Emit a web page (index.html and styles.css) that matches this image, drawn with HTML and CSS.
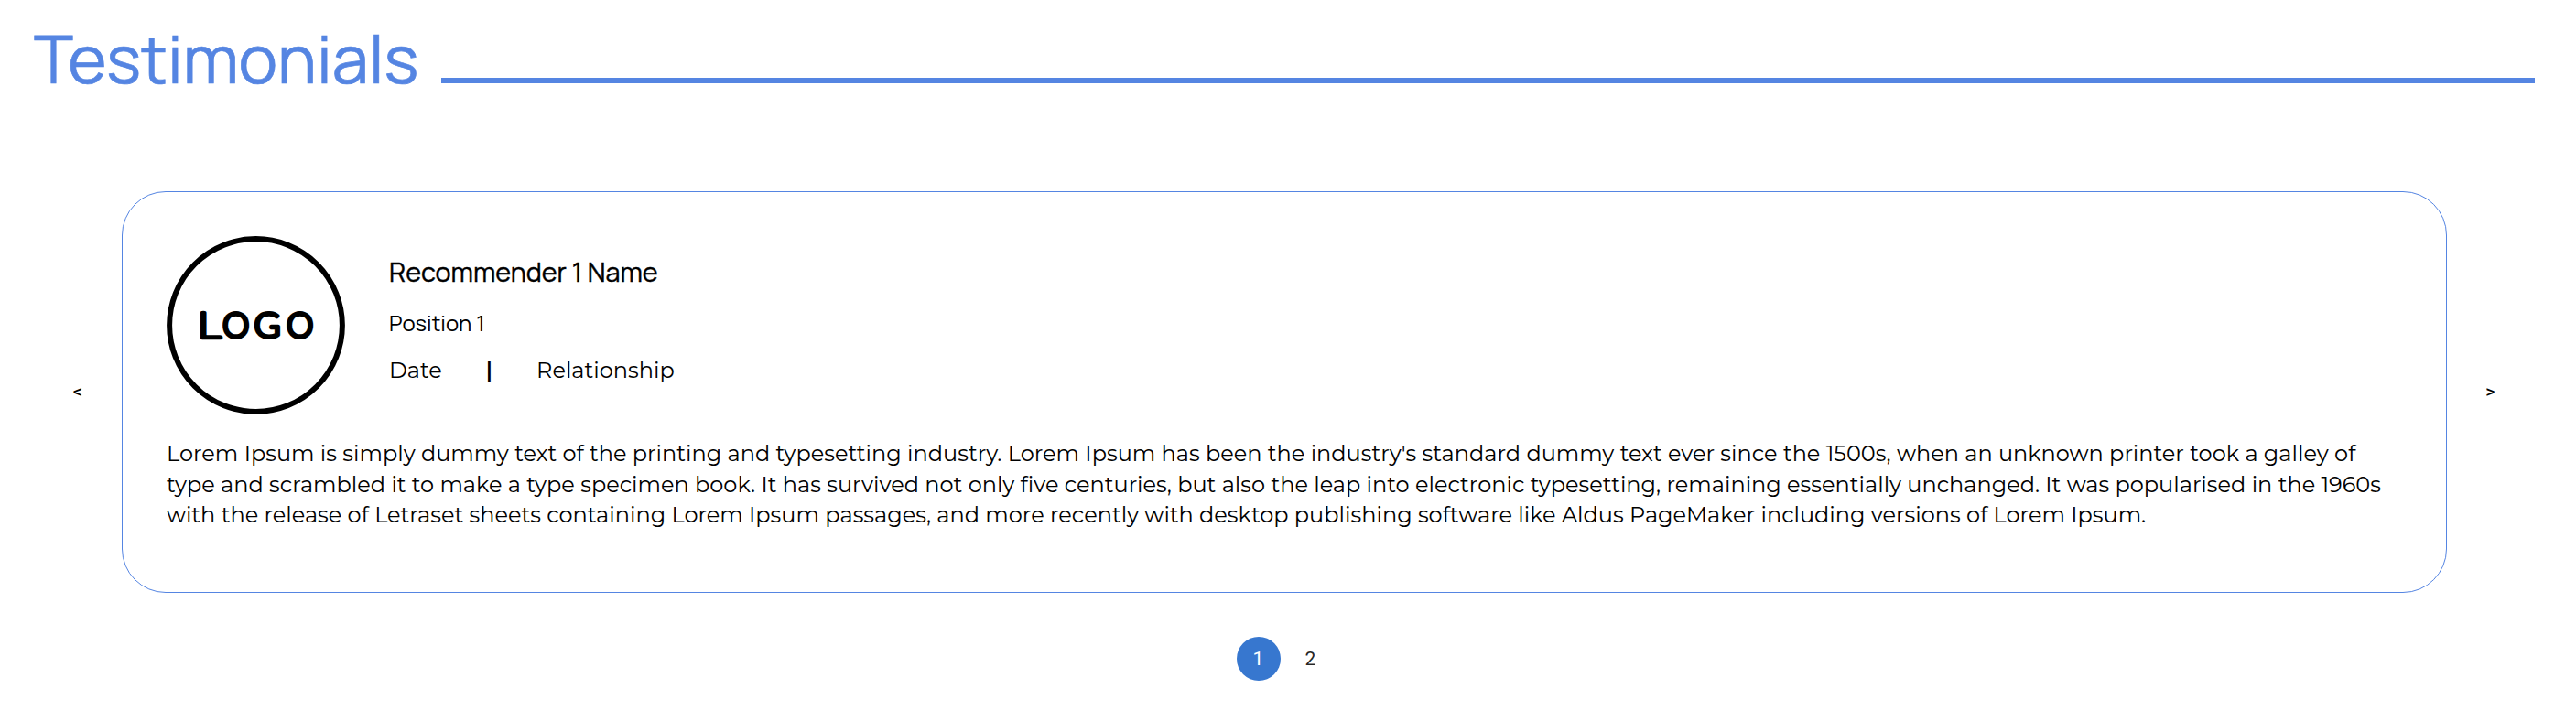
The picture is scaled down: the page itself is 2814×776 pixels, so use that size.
FILE: index.html
```html
<!DOCTYPE html>
<html lang="en">
<head>
<meta charset="utf-8">
<title>Testimonials</title>
<link rel="stylesheet" href="styles.css">
</head>
<body>
<section class="testimonials">
  <header class="heading">
    <h1 class="title">Testimonials</h1>
    <div class="rule"></div>
  </header>
  <div class="carousel">
    <button class="arrow">&lt;</button>
    <article class="card">
      <div class="person">
        <svg class="logo" viewBox="0 0 195 195" role="img" aria-label="Logo">
          <circle cx="97.5" cy="97.5" r="94.4" fill="none" stroke="#000" stroke-width="6"/>
          <text class="logo-text logo-thin" y="111" x="34" textLength="25" lengthAdjust="spacingAndGlyphs">L</text>
          <text class="logo-text" y="111" x="61">O</text>
          <text class="logo-text" y="111" x="95.5" textLength="29" lengthAdjust="spacingAndGlyphs">G</text>
          <text class="logo-text" y="111" x="131">O</text>
        </svg>
        <div class="details">
          <h2 class="name">Recommender 1 Name</h2>
          <p class="position">Position 1</p>
          <div class="meta"><span>Date</span><span class="bar">|</span><span>Relationship</span></div>
        </div>
      </div>
      <p class="quote">Lorem Ipsum is simply dummy text of the printing and typesetting industry. Lorem Ipsum has been the industry's standard dummy text ever since the 1500s, when an unknown printer took a galley of type and scrambled it to make a type specimen book. It has survived not only five centuries, but also the leap into electronic typesetting, remaining essentially unchanged. It was popularised in the 1960s with the release of Letraset sheets containing Lorem Ipsum passages, and more recently with desktop publishing software like Aldus PageMaker including versions of Lorem Ipsum.</p>
    </article>
    <button class="arrow">&gt;</button>
  </div>
  <nav class="pager">
    <button class="page page-current">1</button>
    <button class="page">2</button>
  </nav>
</section>
</body>
</html>
```
FILE: styles.css
```css
* { box-sizing: border-box; margin: 0; }
body { background: #fff; color: #000; font-family: Montserrat, Inter, sans-serif; overflow: hidden; }
button { border: 0; padding: 0; background: none; color: inherit; }
.testimonials { padding: 0 45px 0 37px; }
.heading { display: flex; height: 209px; padding-top: 15px; gap: 24px; }
.title { font: 400 72px/98px Manrope, Inter, sans-serif; color: #5585e2; width: 421px; white-space: nowrap; -webkit-text-stroke: 0.7px #5585e2; }
.rule { flex: 1; height: 6px; margin-top: 70px; background: #5585e2; }
.carousel { display: grid; grid-template-columns: 96px 2540px 96px; height: 439px; }
.arrow { font: 600 18px/20px Montserrat, Inter, sans-serif; align-self: center; }
.carousel .arrow:first-child { padding-right: 1px; }
.carousel .arrow:last-child { padding-right: 1px; }
.card { border: 1px solid #5585e2; border-radius: 48px; padding: 48px; }
.person { display: flex; gap: 48px; height: 221px; }
.logo { width: 195px; height: 195px; flex: none; }
.logo-text { font: 300 37px Lato, sans-serif; stroke: #000; stroke-width: 4px; stroke-linejoin: round; }
.logo-thin { font-weight: 100; stroke-width: 4.6px; }
.details { padding-top: 19px; }
.name { font: 400 28.8px/40px Manrope, Inter, sans-serif; -webkit-text-stroke: 0.4px #000; white-space: nowrap; }
.position { font: 400 24px/34px Manrope, Inter, sans-serif; margin-top: 19px; }
.meta { display: flex; gap: 48px; font-size: 24px; line-height: 34px; margin-top: 18px; }
.bar { font-weight: 600; }
.quote { font-size: 24px; line-height: 33.6px; letter-spacing: 0.012px; }
.pager { display: flex; justify-content: center; gap: 9px; padding: 48px 0 0 0; }
.page { width: 48px; height: 48px; border-radius: 50%; font: 400 21px/48px Roboto, sans-serif; color: rgba(0, 0, 0, .87); }
.page-current { background: #3777cf; color: #fff; }
```
